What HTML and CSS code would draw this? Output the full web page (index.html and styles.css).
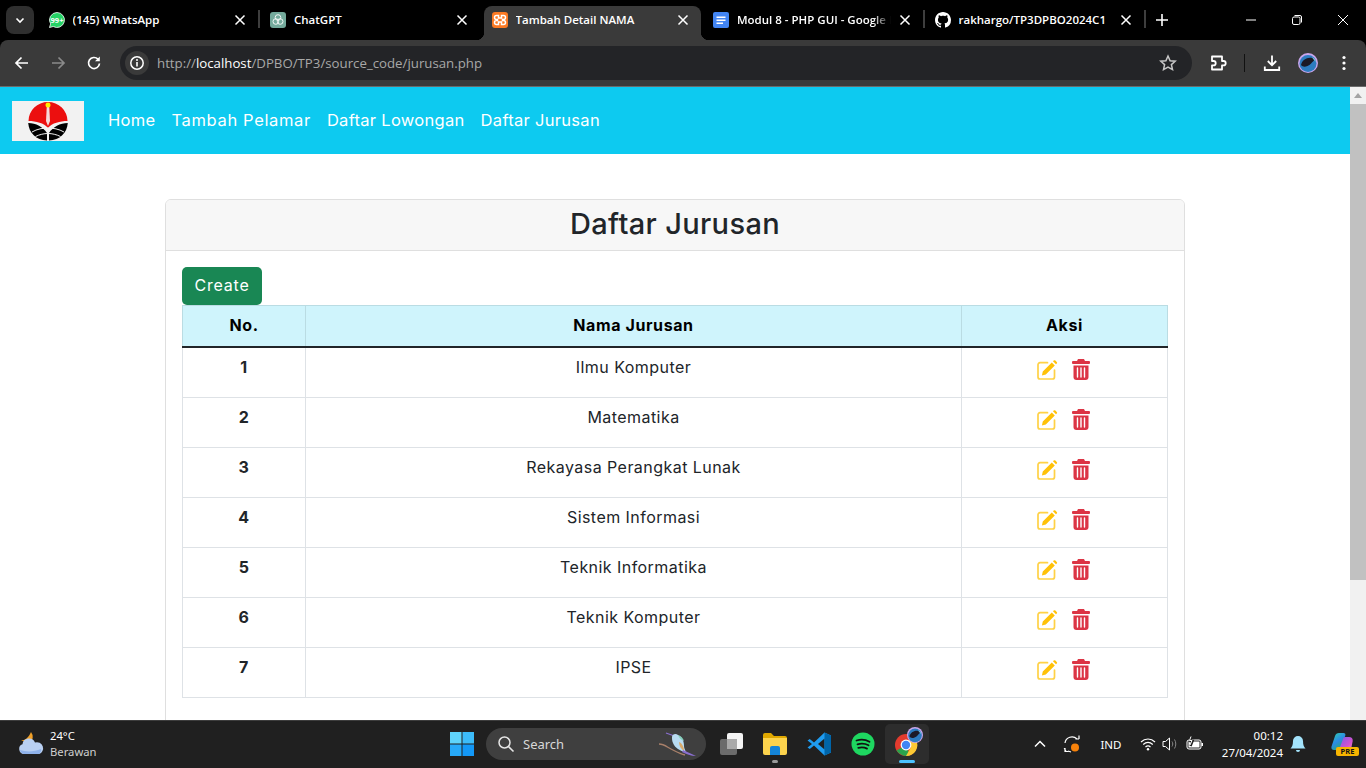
FILE: index.html
```html
<!DOCTYPE html>
<html lang="en">
<head>
  <meta charset="UTF-8" />
  <title>Tambah Detail NAMA</title>
  <link rel="stylesheet" href="styles.css">
</head>
<body>
  <svg class="defs" width="0" height="0">
    <defs>
      <linearGradient id="cp-left" x1="0" y1="0" x2="0.6" y2="1"><stop offset="0" stop-color="#2fd3a8"/><stop offset=".55" stop-color="#2b8be6"/><stop offset="1" stop-color="#2aa86e"/></linearGradient>
      <linearGradient id="cp-right" x1="0" y1="0" x2="1" y2="1"><stop offset="0" stop-color="#7a5ce8"/><stop offset=".6" stop-color="#d152d0"/><stop offset="1" stop-color="#f58fb0"/></linearGradient>
    </defs>
    <symbol id="ico-close" viewBox="0 0 16 16"><path d="M3.500 3.500l9 9M12.500 3.500l-9 9" stroke="#fff" stroke-width="1.500" fill="none"/></symbol>
    <symbol id="ico-edit" viewBox="0 0 21 20">
      <path d="M10.500 2.700H3a2 2 0 0 0-2 2V17a2 2 0 0 0 2 2h12.500a2 2 0 0 0 2-2V10" fill="none" stroke="#ffc107" stroke-opacity=".75" stroke-width="1.700" stroke-linecap="round"/>
      <path d="M5.800 11.500L14.800 2.500l3 3-9 9-3.900.9zM16 1.300l.7-.7a1.200 1.200 0 0 1 1.700 0l1.300 1.300a1.200 1.200 0 0 1 0 1.700l-.7.700z" fill="#ffc107"/>
    </symbol>
    <symbol id="ico-trash" viewBox="0 0 18 21">
      <path d="M6 0h6l1 2h4a1 1 0 0 1 1 1v1a1 1 0 0 1-1 1H1A1 1 0 0 1 0 4V3a1 1 0 0 1 1-1h4z" fill="#dc3545"/>
      <path d="M1.500 6.500h15V18a3 3 0 0 1-3 3h-9a3 3 0 0 1-3-3z" fill="#dc3545"/>
      <path d="M5.500 9v9M9 9v9M12.500 9v9" stroke="#fff" stroke-width="1.400" stroke-linecap="round"/>
    </symbol>
    <symbol id="ico-avatar" viewBox="0 0 20 20">
      <circle cx="10" cy="10" r="10" fill="#c9a6ec"/>
      <circle cx="10" cy="10.500" r="8.500" fill="#2c7cc0"/>
      <path d="M3 12c1-5 6-8 11-7 2 .5 3 2 1.500 3-2 1.500-3 4-6 5-2.500 1-5 1-6.500-1z" fill="#1b1a26"/>
      <path d="M14 4c2 1 3.500 3 4 5-1-1-3-3-4-5z" fill="#8fe0e0"/>
    </symbol>
  </svg>

  <div class="window">
    <div class="tabstrip">
      <div class="tab-menu"><span class="tab-menu-btn">
        <svg width="12" height="12" viewBox="0 0 12 12"><path d="M2.500 4.500L6 8l3.500-3.500" stroke="#fff" stroke-width="1.600" fill="none"/></svg>
      </span></div>

      <div class="tab">
        <svg class="favicon" viewBox="0 0 16 16"><path d="M8 .5a7.500 7.500 0 0 0-6.400 11.400L.5 15.500l3.700-1A7.500 7.500 0 1 0 8 .5z" fill="#25d366" stroke="#fff" stroke-width=".8"/><text x="8" y="10.700" class="wa-badge">99+</text></svg>
        <span class="tab-title">(145) WhatsApp</span>
        <svg class="tab-close"><use href="#ico-close"/></svg>
      </div>
      <span class="tab-sep"></span>

      <div class="tab">
        <svg class="favicon" viewBox="0 0 16 16"><rect width="16" height="16" rx="3" fill="#74aa9c"/><g fill="none" stroke="#fff" stroke-width="1" opacity=".9"><circle cx="8" cy="5.500" r="2.800"/><circle cx="5.800" cy="9.500" r="2.800"/><circle cx="10.200" cy="9.500" r="2.800"/></g></svg>
        <span class="tab-title">ChatGPT</span>
        <svg class="tab-close"><use href="#ico-close"/></svg>
      </div>
      <span class="tab-sep tab-sep-hidden"></span>

      <div class="tab tab-active">
        <svg class="favicon" viewBox="0 0 16 16"><rect width="16" height="16" rx="3" fill="#fb7a24"/><path d="M4.500 3.500H6.500V6H9.500V3.500H11.500a1.500 1.500 0 0 1 0 4H10.500V8.500H11.500a1.500 1.500 0 0 1 0 4H9.500V10H6.500V12.500H4.500a1.500 1.500 0 0 1 0-4H5.500V7.500H4.500a1.500 1.500 0 0 1 0-4z" fill="none" stroke="#fff" stroke-width="1.500"/></svg>
        <span class="tab-title">Tambah Detail NAMA</span>
        <svg class="tab-close"><use href="#ico-close"/></svg>
      </div>
      <span class="tab-sep tab-sep-hidden"></span>

      <div class="tab">
        <svg class="favicon" viewBox="0 0 16 16"><rect width="16" height="16" rx="2" fill="#4285f4"/><path d="M3.500 4.500h9v1.500h-9zM3.500 7.500h9V9h-9zM3.500 10.500h6.500V12H3.500z" fill="#fff"/></svg>
        <span class="tab-title tab-title-fade">Modul 8 - PHP GUI - Google Docs</span>
        <svg class="tab-close"><use href="#ico-close"/></svg>
      </div>
      <span class="tab-sep"></span>

      <div class="tab">
        <svg class="favicon" viewBox="0 0 16 16"><path fill="#fff" d="M8 0C3.580 0 0 3.580 0 8c0 3.540 2.290 6.530 5.470 7.590.4.070.55-.17.55-.38 0-.19-.01-.82-.01-1.490-2.010.37-2.530-.49-2.690-.94-.09-.23-.48-.94-.82-1.130-.28-.15-.68-.52-.01-.53.630-.01 1.080.58 1.230.82.720 1.210 1.870.87 2.330.66.070-.52.280-.87.510-1.070-1.780-.2-3.640-.89-3.640-3.950 0-.87.310-1.590.82-2.150-.08-.2-.36-1.020.08-2.120 0 0 .67-.21 2.200.82.640-.18 1.320-.27 2-.27s1.360.09 2 .27c1.530-1.040 2.200-.82 2.200-.82.440 1.100.16 1.920.08 2.120.51.560.82 1.270.82 2.150 0 3.070-1.870 3.750-3.650 3.950.29.250.54.730.54 1.480 0 1.070-.01 1.930-.01 2.200 0 .21.150.46.550.38A8.010 8.010 0 0 0 16 8c0-4.420-3.580-8-8-8z"/></svg>
        <span class="tab-title">rakhargo/TP3DPBO2024C1</span>
        <svg class="tab-close"><use href="#ico-close"/></svg>
      </div>
      <span class="tab-sep"></span>

      <div class="tab-new">
        <svg width="14" height="14" viewBox="0 0 14 14"><path d="M7 1v12M1 7h12" stroke="#fff" stroke-width="1.600"/></svg>
      </div>

      <div class="win-controls">
        <span class="win-btn"><svg width="12" height="12" viewBox="0 0 12 12"><path d="M1 6h10" stroke="#fff"/></svg></span>
        <span class="win-btn"><svg width="12" height="12" viewBox="0 0 12 12"><rect x="1.500" y="3" width="7.500" height="7.500" rx="1.500" fill="none" stroke="#fff"/><path d="M3.500 1.500h5.500a1.500 1.500 0 0 1 1.500 1.500v5.500" fill="none" stroke="#fff"/></svg></span>
        <span class="win-btn"><svg width="12" height="12" viewBox="0 0 12 12"><path d="M1 1l10 10M11 1L1 11" stroke="#fff"/></svg></span>
      </div>
    </div>

    <div class="toolbar">
      <span class="tool-btn"><svg width="16" height="16" viewBox="0 0 16 16"><path d="M14 8H2.500M7.500 2.500L2 8l5.500 5.500" stroke="#fff" stroke-width="1.700" fill="none"/></svg></span>
      <span class="tool-btn"><svg width="16" height="16" viewBox="0 0 16 16"><path d="M2 8h11.500M8.500 2.500L14 8l-5.500 5.500" stroke="#8a8a8a" stroke-width="1.700" fill="none"/></svg></span>
      <span class="tool-btn"><svg width="16" height="16" viewBox="0 0 16 16"><path d="M13.500 8.500A5.500 5.500 0 1 1 12 4.200" stroke="#fff" stroke-width="1.700" fill="none"/><path d="M13.800 1.500v4.800H9z" fill="#fff"/></svg></span>

      <div class="omnibox">
        <span class="site-info"><svg width="16" height="16" viewBox="0 0 16 16"><circle cx="8" cy="8" r="6.200" fill="none" stroke="#fff" stroke-width="1.500"/><path d="M8 7v4.500" stroke="#fff" stroke-width="1.600"/><circle cx="8" cy="4.900" r="1" fill="#fff"/></svg></span>
        <span class="url">http://<b>localhost</b>/DPBO/TP3/source_code/jurusan.php</span>
        <svg class="star" width="18" height="18" viewBox="0 0 18 18"><path d="M9 2l2.100 4.700 5.100.5-3.800 3.400 1.100 5L9 13l-4.500 2.600 1.100-5L1.800 7.200l5.100-.5z" fill="none" stroke="#c7c7c7" stroke-width="1.500"/></svg>
      </div>

      <span class="tool-btn"><svg width="18" height="18" viewBox="0 0 18 18"><path d="M3 2.500H13V7H14.500a2.200 2.200 0 0 1 0 4.400H13V15.500H3V11.400H4.500a2.200 2.200 0 0 0 0-4.400H3z" fill="none" stroke="#fff" stroke-width="1.800" stroke-linejoin="round"/></svg></span>
      <span class="tool-sep"></span>
      <span class="tool-btn"><svg width="18" height="18" viewBox="0 0 18 18"><path d="M9 1.500V11M4.800 7L9 11.200 13.200 7M1.800 12.500v3.500h14.400v-3.500" fill="none" stroke="#fff" stroke-width="1.800"/></svg></span>
      <span class="tool-btn"><svg width="20" height="20"><use href="#ico-avatar"/></svg></span>
      <span class="tool-btn"><svg width="16" height="16" viewBox="0 0 16 16"><circle cx="8" cy="2.500" r="1.600" fill="#fff"/><circle cx="8" cy="8" r="1.600" fill="#fff"/><circle cx="8" cy="13.500" r="1.600" fill="#fff"/></svg></span>
    </div>

    <div class="viewport">
      <div class="page">
        <nav class="navbar">
          <svg class="logo" viewBox="0 0 72 40">
            <rect width="72" height="40" fill="#f2f2f2"/>
            <path d="M16.500 20A19.500 19 0 0 1 55.500 20C48 20 40 22 36 27 32 22 24 20 16.500 20z" fill="#ec0f0f"/>
            <path d="M34.800 5h2.400l.8 15-2 5-2-5z" fill="#f6d8d8"/>
            <circle cx="36" cy="4" r="2.500" fill="#ffef00"/>
            <path d="M16.200 22C24 22 31 26 35 32V39.500C24 39 17 32 16.200 22zM55.800 22C48 22 41 26 37 32V39.500C48 39 55 32 55.800 22z" fill="#000"/>
            <path d="M20 31c5-3 11-4 16-4s11 1 16 4M23.500 35.500c4-2 8.500-3 12.500-3s8.500 1 12.500 3" fill="none" stroke="#f2f2f2"/>
            <path d="M36 30v10" stroke="#f2f2f2"/>
          </svg>
          <a class="nav-link" href="#">Home</a>
          <a class="nav-link nav-link-wide" href="#">Tambah Pelamar</a>
          <a class="nav-link" href="#">Daftar Lowongan</a>
          <a class="nav-link" href="#">Daftar Jurusan</a>
        </nav>

        <div class="card">
          <div class="card-header">Daftar Jurusan</div>
          <div class="card-body">
            <a class="btn-create" href="#">Create</a>
            <table class="data-table">
              <thead>
                <tr><th class="col-no">No.</th><th class="col-name">Nama Jurusan</th><th class="col-act">Aksi</th></tr>
              </thead>
              <tbody>
                <tr><td class="num">1</td><td>Ilmu Komputer</td><td><span class="actions"><svg class="ico-edit"><use href="#ico-edit"/></svg><svg class="ico-trash"><use href="#ico-trash"/></svg></span></td></tr>
                <tr><td class="num">2</td><td>Matematika</td><td><span class="actions"><svg class="ico-edit"><use href="#ico-edit"/></svg><svg class="ico-trash"><use href="#ico-trash"/></svg></span></td></tr>
                <tr><td class="num">3</td><td>Rekayasa Perangkat Lunak</td><td><span class="actions"><svg class="ico-edit"><use href="#ico-edit"/></svg><svg class="ico-trash"><use href="#ico-trash"/></svg></span></td></tr>
                <tr><td class="num">4</td><td>Sistem Informasi</td><td><span class="actions"><svg class="ico-edit"><use href="#ico-edit"/></svg><svg class="ico-trash"><use href="#ico-trash"/></svg></span></td></tr>
                <tr><td class="num">5</td><td>Teknik Informatika</td><td><span class="actions"><svg class="ico-edit"><use href="#ico-edit"/></svg><svg class="ico-trash"><use href="#ico-trash"/></svg></span></td></tr>
                <tr><td class="num">6</td><td>Teknik Komputer</td><td><span class="actions"><svg class="ico-edit"><use href="#ico-edit"/></svg><svg class="ico-trash"><use href="#ico-trash"/></svg></span></td></tr>
                <tr><td class="num">7</td><td>IPSE</td><td><span class="actions"><svg class="ico-edit"><use href="#ico-edit"/></svg><svg class="ico-trash"><use href="#ico-trash"/></svg></span></td></tr>
              </tbody>
            </table>
          </div>
        </div>
      </div>

      <div class="scrollbar">
        <span class="scroll-up"></span>
        <span class="scroll-thumb"></span>
      </div>
    </div>

    <div class="taskbar">
      <div class="weather">
        <svg width="28" height="26" viewBox="0 0 28 26"><path d="M14 1a8 8 0 0 1-1 11L4 9.500C8 9.500 12 6 14 1z" fill="#f0a028"/><path d="M7 23a5 5 0 0 1-1.500-9.700A6.500 6.500 0 0 1 18 11.500 5.800 5.800 0 0 1 22 23z" fill="#b9d0f2"/><path d="M3 19c6 2 14 2 21-1a5 5 0 0 1-2 5H7a5 5 0 0 1-4-4z" fill="#8fb2ea"/></svg>
        <div class="weather-text">
          <span class="temp">24°C</span>
          <span class="cond">Berawan</span>
        </div>
      </div>

      <span class="task-start">
        <svg width="24" height="24" viewBox="0 0 24 24"><path d="M0 0h11.500v11.500H0z" fill="#5fd4fb"/><path d="M12.500 0H24v11.500H12.500z" fill="#3cbcfa"/><path d="M0 12.500h11.500V24H0z" fill="#27a9f8"/><path d="M12.500 12.500H24V24H12.500z" fill="#1398f7"/></svg>
      </span>

      <div class="search-box">
        <svg width="18" height="18" viewBox="0 0 18 18"><circle cx="7.500" cy="7.500" r="5.500" fill="none" stroke="#e6e6e6" stroke-width="1.500"/><path d="M11.500 11.500l5 5" stroke="#e6e6e6" stroke-width="1.600"/></svg>
        <span class="search-label">Search</span>
        <svg class="bird" width="38" height="28" viewBox="0 0 38 28">
          <path d="M0 14c5 0 8 3 12 5s9 5 14 6" fill="none" stroke="#a9806a" stroke-width="1.300"/>
          <path d="M7 3l7 2.500" stroke="#8a6fd0" stroke-width="1.300"/>
          <path d="M13 7c0-3 4-4 6-2 4 2 6 6 6 11 0 2 1 4 2 6-6-1-11-4-13-9-1-2-1-4-1-6z" fill="#b9dcf2"/>
          <path d="M19 5c3 1 5 3 6 6-3-1-5-3-6-6z" fill="#86d0bc"/>
          <path d="M20 12c3 1 5 5 5 9-3-2-5-5-5-9z" fill="#d9a96a"/>
          <path d="M24 20l13 6c-5 0-10-2-14-4z" fill="#8a6fd0"/>
        </svg>
      </div>

      <span class="task-app">
        <svg width="24" height="24" viewBox="0 0 24 24"><rect x="1" y="7" width="17" height="16" rx="2" fill="#6b6b6b"/><rect x="8" y="1" width="16" height="16" rx="2" fill="#f4f4f4"/><rect x="8" y="7" width="10" height="10" fill="#a9a9a9"/></svg>
      </span>
      <span class="task-app task-app-open">
        <svg width="26" height="24" viewBox="0 0 26 24"><path d="M1 3a2 2 0 0 1 2-2h6l3 3h11a2 2 0 0 1 2 2v3H1z" fill="#e0a800"/><path d="M1 6h24v15a2 2 0 0 1-2 2H3a2 2 0 0 1-2-2z" fill="#fcd34d"/><path d="M8 16a2 2 0 0 1 2-2h6a2 2 0 0 1 2 2v7H8z" fill="#1484d8"/></svg>
      </span>
      <span class="task-app">
        <svg width="24" height="24" viewBox="0 0 24 24"><path d="M17.500 0.500L24 3.500v17l-6.500 3L7 13.500 2.800 17 .5 15.500 5 12 .5 8.500 2.800 7 7 10.500z" fill="#1f9cf0"/><path d="M17.500 6.500L11 12l6.500 5.500z" fill="#202020"/><path d="M17.500 .5L24 3.500v17l-6.500 3z" fill="#0065a9"/></svg>
      </span>
      <span class="task-app">
        <svg width="24" height="24" viewBox="0 0 24 24"><circle cx="12" cy="12" r="11.500" fill="#1ed760"/><path d="M5.500 8.500c4.500-1.300 9-1 13 1.200M6.500 12.300c3.800-1 7.500-.8 11 1M7.300 15.800c3-.7 6-.6 8.700.8" fill="none" stroke="#111" stroke-width="1.800" stroke-linecap="round"/></svg>
      </span>
      <span class="task-app task-app-active">
        <svg width="26" height="26" viewBox="0 0 26 26"><circle cx="12" cy="14" r="11" fill="#e33b2e"/><path d="M12 14L2.500 19.500A11 11 0 0 0 16 24.200z" fill="#2ba24c"/><path d="M12 9h10.200A11 11 0 0 1 12 25l5-9z" fill="#fcc934"/><circle cx="12" cy="14" r="5.400" fill="#fff"/><circle cx="12" cy="14" r="4.200" fill="#4285f4"/></svg>
        <svg class="chrome-badge"><use href="#ico-avatar"/></svg>
      </span>

      <svg class="tray-chevron" width="14" height="14" viewBox="0 0 14 14"><path d="M2 9.500L7 4.500l5 5" stroke="#fff" stroke-width="1.500" fill="none"/></svg>
      <svg class="tray-sync" width="20" height="20" viewBox="0 0 20 20"><path d="M3 9a7 7 0 0 1 12-4M17 5V1.500M17 5h-3.500M4 17c-1-1-1.500-2-1.700-3M3 14v3.500h3.500M6 17l3 1" fill="none" stroke="#fff" stroke-width="1.200"/><circle cx="13" cy="13.500" r="4" fill="#f7820b"/></svg>
      <span class="tray-lang">IND</span>
      <svg class="tray-wifi" width="16" height="16" viewBox="0 0 16 16"><path d="M1 6c4-4 10-4 14 0M3.200 8.500c3-2.700 6.600-2.700 9.600 0M5.500 11c1.600-1.300 3.400-1.300 5 0" fill="none" stroke="#fff" stroke-width="1.200"/><circle cx="8" cy="13.300" r="1.200" fill="#fff"/></svg>
      <svg class="tray-vol" width="16" height="16" viewBox="0 0 16 16"><path d="M1 5.500h2.500L7.500 2v12L3.500 10.500H1z" fill="none" stroke="#fff"/><path d="M10 5.500c1 1.500 1 3.500 0 5M12.500 3.500c1.700 2.700 1.700 6.300 0 9" fill="none" stroke="#888" stroke-width="1"/></svg>
      <svg class="tray-batt" width="18" height="16" viewBox="0 0 18 16"><rect x="1" y="4" width="14" height="9" rx="2" fill="none" stroke="#fff"/><rect x="2.500" y="5.500" width="11" height="6" fill="#fff"/><path d="M15.500 7h1.500v3h-1.500z" fill="#fff"/><path d="M4.500 0v5h2l-2 5" fill="none" stroke="#202020" stroke-width="2.500"/><path d="M5 0.500L3.500 4.500h2.500L4 9" fill="none" stroke="#fff"/></svg>
      <div class="clock"><span>00:12</span><span>27/04/2024</span></div>
      <svg class="tray-bell" width="16" height="18" viewBox="0 0 16 18"><path d="M8 1a5 5 0 0 1 5 5c0 4 1 6 2.500 7.500h-15C2 12 3 10 3 6a5 5 0 0 1 5-5z" fill="#a3e3fb"/><path d="M6 15h4a2 2 0 0 1-4 0z" fill="#a3e3fb"/></svg>
      <span class="copilot">
        <svg width="22" height="20" viewBox="0 0 22 20"><path d="M8 0h4.500c1.500 0 2.300 1.200 1.800 2.600L10 15c-.6 1.500-1.500 2-3 2H3c-2 0-3-1.500-2.500-3.500L4 3C4.600 1 6 0 8 0z" fill="url(#cp-left)"/><path d="M14 4h4c2.500 0 4 1.500 3.700 4L20.500 14c-.5 3-2 5-5 5H9.500c-1.500 0-2-1-1.500-2.300L12 6c.4-1.300 1-2 2-2z" fill="url(#cp-right)"/></svg>
        <span class="pre-badge">PRE</span>
      </span>
    </div>
  </div>
</body>
</html>
```

FILE: styles.css
```css
* {
  box-sizing: border-box;
}

html, body {
  margin: 0;
  height: 100%;
  overflow: hidden;
}

.defs {
  position: absolute;
}

.window {
  width: 1366px;
  height: 768px;
  display: flex;
  flex-direction: column;
  background: #000;
  font-family: "Open Sans", "Noto Sans", sans-serif;
}

/* browser tabs */
.tabstrip {
  height: 40px;
  display: flex;
  align-items: flex-end;
  flex: none;
  color: #fff;
}

.tab-menu {
  width: 40.500px;
  height: 40px;
  padding: 6px;
}

.tab-menu-btn {
  width: 28px;
  height: 28px;
  border-radius: 8px;
  background: #2f2f2f;
  display: flex;
  align-items: center;
  justify-content: center;
}

.tab {
  position: relative;
  width: 217.500px;
  height: 34px;
  display: flex;
  align-items: center;
  padding: 0 10px 6px 8px;
  border-radius: 8px 8px 0 0;
}

.tab-active {
  background: #3a3a3a;
}

.tab-active::before,
.tab-active::after {
  content: "";
  position: absolute;
  bottom: 0;
  width: 8px;
  height: 8px;
}

.tab-active::before {
  left: -8px;
  background: radial-gradient(circle at 0 0, #000 8px, #3a3a3a 8.500px);
}

.tab-active::after {
  right: -8px;
  background: radial-gradient(circle at 100% 0, #000 8px, #3a3a3a 8.500px);
}

.favicon {
  width: 16px;
  height: 16px;
  flex: none;
}

.wa-badge {
  font-family: "Open Sans", sans-serif;
  font-size: 7.500px;
  font-weight: 700;
  fill: #fff;
  text-anchor: middle;
}

.tab-title {
  flex: 1;
  min-width: 0;
  margin-left: 8px;
  margin-right: 6px;
  font-size: 11.500px;
  font-weight: 600;
  line-height: 16px;
  white-space: nowrap;
  overflow: hidden;
}

.tab-title-fade {
  -webkit-mask-image: linear-gradient(to right, #000 88%, transparent);
  mask-image: linear-gradient(to right, #000 88%, transparent);
}

.tab-close {
  width: 16px;
  height: 16px;
  flex: none;
}

.tab-sep {
  width: 2px;
  height: 18px;
  margin: 0 2px 12px 0;
  background: #3e3e3e;
}

.tab-sep-hidden {
  background: transparent;
}

.tab-new {
  width: 22px;
  height: 40px;
  margin-left: 3px;
  display: flex;
  align-items: center;
  justify-content: center;
}

.win-controls {
  margin-left: auto;
  height: 40px;
  display: flex;
}

.win-btn {
  width: 46px;
  display: flex;
  align-items: center;
  justify-content: center;
}

/* address bar */
.toolbar {
  height: 47px;
  flex: none;
  display: flex;
  align-items: flex-start;
  padding: 6px 4px 0;
  background: #3a3a3a;
  border-radius: 8px 8px 0 0;
  border-bottom: 1px solid #6b6b6b;
}

.tool-btn {
  width: 36px;
  height: 34px;
  flex: none;
  display: flex;
  align-items: center;
  justify-content: center;
}

.omnibox {
  width: 1072px;
  height: 34px;
  margin: 0 8px;
  padding: 0 15px 0 5px;
  border-radius: 17px;
  background: #232427;
  display: flex;
  align-items: center;
}

.site-info {
  width: 24px;
  height: 24px;
  border-radius: 50%;
  background: #3a3a3a;
  display: flex;
  align-items: center;
  justify-content: center;
  flex: none;
}

.url {
  margin-left: 8px;
  font-size: 13.250px;
  color: #a8a8a8;
  white-space: nowrap;
}

.url b {
  font-weight: 400;
  color: #fff;
}

.star {
  margin-left: auto;
}

.tool-sep {
  width: 1px;
  height: 18px;
  margin: 8px 9px 0 8px;
  background: #111;
}

/* page content */
.viewport {
  flex: 1;
  min-height: 0;
  display: flex;
  background: #fff;
  overflow: hidden;
}

.page {
  flex: 1;
  min-width: 0;
  font-family: "Inter", sans-serif;
  color: #212529;
  overflow: hidden;
}

.navbar {
  height: 67px;
  padding: 14px 12px 13px;
  background: #0dcaf0;
  display: flex;
  align-items: flex-start;
  gap: 16px;
}

.logo {
  width: 72px;
  height: 40px;
  margin-right: 8px;
  flex: none;
}

.nav-link {
  font-size: 16.500px;
  letter-spacing: .3px;
  line-height: 38px;
  height: 40px;
  color: #fff;
  text-decoration: none;
}

.nav-link-wide {
  letter-spacing: .65px;
}

.card {
  width: 1020px;
  margin: 45px auto 0;
  border: 1px solid #dfdfdf;
  border-radius: 6px;
}

.card-header {
  height: 51px;
  background: #f7f7f7;
  border-bottom: 1px solid #dfdfdf;
  border-radius: 5px 5px 0 0;
  text-align: center;
  font-size: 29px;
  letter-spacing: .35px;
  font-weight: 500;
  line-height: 48px;
}

.card-body {
  padding: 16px 16px 60px;
}

.btn-create {
  display: block;
  width: 80px;
  height: 38px;
  background: #198754;
  border-radius: 5px;
  color: #fff;
  font-size: 16px;
  letter-spacing: .8px;
  line-height: 36px;
  text-align: center;
  text-decoration: none;
}

.data-table {
  width: 986px;
  border-collapse: collapse;
  table-layout: fixed;
  font-size: 16px;
  letter-spacing: .45px;
  line-height: 24px;
}

.data-table th,
.data-table td {
  padding: 7px 8px 8px;
  text-align: center;
  vertical-align: top;
  border: 1px solid #dee2e6;
}

.data-table th {
  height: 41px;
  background: #cff4fc;
  border-color: #badce3;
  border-bottom: 2px solid #212529;
  font-weight: 700;
  letter-spacing: .6px;
  color: #000;
}

.data-table td {
  height: 50px;
}

.data-table tbody tr:first-child td {
  height: 51px;
}

.col-no {
  width: 123px;
}

.col-act {
  width: 206px;
}

.data-table .num {
  font-weight: 700;
}

.actions {
  display: flex;
  justify-content: center;
  align-items: flex-start;
  gap: 14px;
  padding: 4px 2px 0 0;
}

.ico-edit {
  width: 21px;
  height: 20px;
  margin-top: 1px;
}

.ico-trash {
  width: 18px;
  height: 21px;
}

.scrollbar {
  width: 16px;
  flex: none;
  background: #f1f1f1;
  display: flex;
  flex-direction: column;
  align-items: center;
}

.scroll-up {
  width: 0;
  height: 0;
  margin-top: 6px;
  border-left: 4px solid transparent;
  border-right: 4px solid transparent;
  border-bottom: 5px solid #a3a3a3;
}

.scroll-thumb {
  width: 16px;
  height: 476px;
  margin-top: 6px;
  background: #c1c1c1;
}

/* windows taskbar */
.taskbar {
  height: 48px;
  flex: none;
  display: flex;
  align-items: center;
  padding-bottom: 1px;
  background: #202020;
  border-top: 1px solid #3d3d3d;
  color: #fff;
  font-family: "Noto Sans", sans-serif;
}

.weather {
  width: 440px;
  padding-left: 17px;
  display: flex;
  align-items: center;
  gap: 5px;
  flex: none;
}

.weather-text {
  display: flex;
  flex-direction: column;
  font-size: 11.250px;
  line-height: 16px;
}

.cond {
  color: #cfcfcf;
}

.task-start {
  width: 44px;
  display: flex;
  justify-content: center;
  flex: none;
}

.search-box {
  position: relative;
  width: 220px;
  height: 32px;
  margin: 0 3px 0 2px;
  padding: 0 0 0 11px;
  border-radius: 16px;
  background: #3f3f3f;
  display: flex;
  align-items: center;
  flex: none;
}

.search-label {
  margin-left: 8px;
  font-size: 13px;
  color: #d8d8d8;
}

.bird {
  position: absolute;
  right: 9px;
  top: 2px;
}

.task-app {
  position: relative;
  width: 44px;
  height: 40px;
  display: flex;
  align-items: center;
  justify-content: center;
  flex: none;
  border-radius: 5px;
}

.task-app-open::after,
.task-app-active::after {
  content: "";
  position: absolute;
  bottom: 1px;
  left: 50%;
  height: 3px;
  border-radius: 2px;
}

.task-app-open::after {
  width: 6px;
  margin-left: -3px;
  background: #9a9a9a;
}

.task-app-active {
  background: #2d2d2d;
}

.task-app-active::after {
  width: 16px;
  margin-left: -8px;
  background: #4cc2ff;
}

.chrome-badge {
  position: absolute;
  top: 3px;
  right: 6px;
  width: 16px;
  height: 16px;
}

.tray-chevron {
  margin-left: 104px;
}

.tray-sync {
  margin-left: 15px;
}

.tray-lang {
  width: 30px;
  margin-left: 14px;
  text-align: center;
  font-size: 11.500px;
}

.tray-wifi {
  margin-left: 14px;
}

.tray-vol {
  margin-left: 6px;
}

.tray-batt {
  margin-left: 8px;
}

.clock {
  width: 65px;
  margin-left: 14px;
  display: flex;
  flex-direction: column;
  align-items: flex-end;
  font-size: 11.500px;
  line-height: 17px;
}

.tray-bell {
  margin-left: 7px;
}

.copilot {
  position: relative;
  width: 32px;
  height: 32px;
  margin-left: 19px;
  padding: 5px 0 0 6px;
  flex: none;
}

.pre-badge {
  position: absolute;
  right: -2px;
  bottom: 4px;
  width: 23px;
  border-radius: 2px;
  background: #f7b500;
  color: #111;
  font-size: 7.500px;
  font-weight: 700;
  line-height: 9px;
  text-align: center;
}
```
